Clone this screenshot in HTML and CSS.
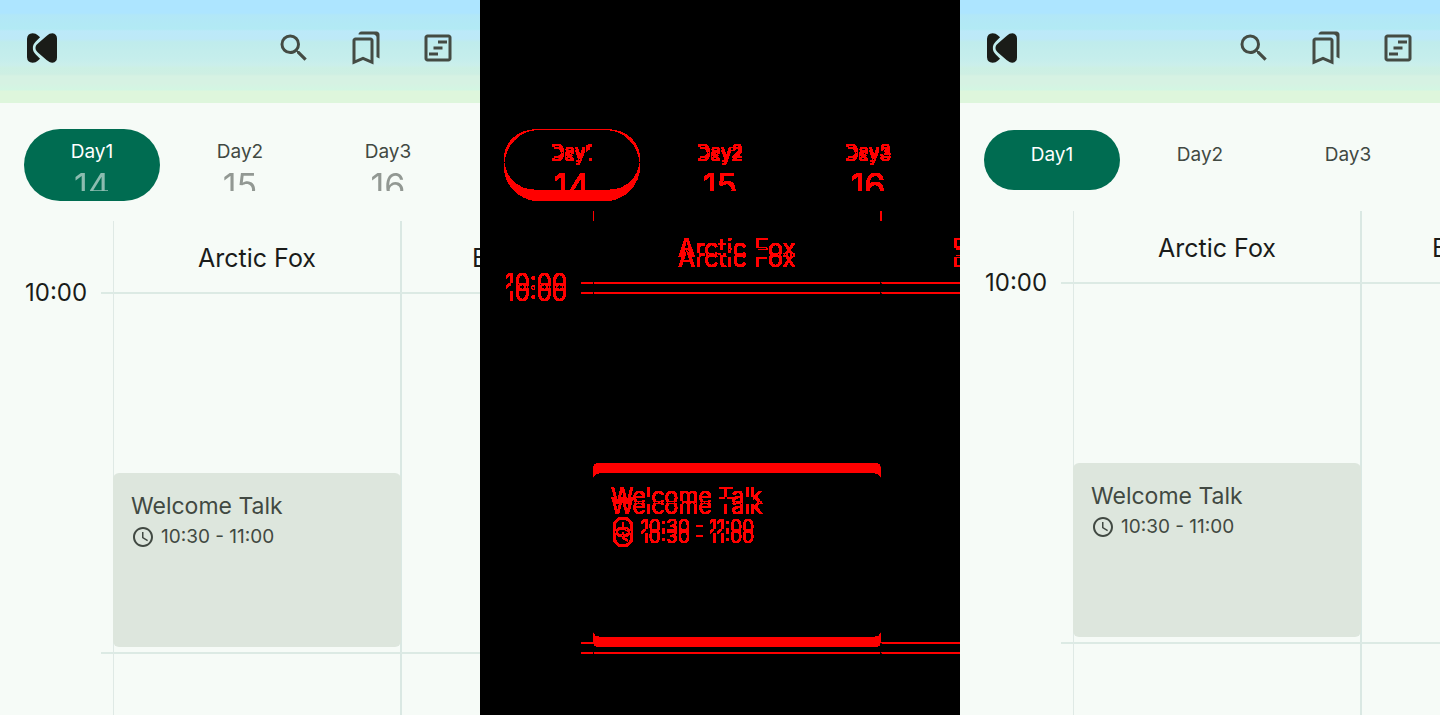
FILE: index.html
```
<!DOCTYPE html>
<html lang="en">
<head>
<meta charset="utf-8">
<title>Timetable comparison</title>
<link rel="stylesheet" href="styles.css">
</head>
<body>
<svg class="defs" aria-hidden="true">
  <defs>
    <filter id="mark-changes" x="0" y="0" width="100%" height="100%" color-interpolation-filters="sRGB">
      <feColorMatrix type="matrix" values="100 100 100 0 -1  0 0 0 0 0  0 0 0 0 0  0 0 0 0 1"/>
    </filter>
    <symbol id="logo" viewBox="0 0 92 90">
      <path d="M26 45C26 38 30 34 36 29L60 8C67 2 72 0 78 0Q92 2 92 16V74Q92 88 78 90C72 90 66 87 60 82L36 61C30 56 26 52 26 45Z"/>
      <path d="M0 17Q1 1 17 0C24 0 29 3 33 6L40 12L27 25C20 32 18 38 18 45C18 52 20 58 27 65L40 78L33 84C29 88 24 90 17 90Q1 89 0 73Z"/>
    </symbol>
    <symbol id="search" viewBox="0 0 24 24">
      <path d="M15.5 14h-.79l-.28-.27A6.47 6.47 0 0 0 16 9.5 6.5 6.5 0 1 0 9.5 16c1.61 0 3.09-.59 4.23-1.57l.27.28v.79l5 4.99L20.49 19l-4.99-5zm-6 0C7.01 14 5 11.99 5 9.5S7.01 5 9.5 5 14 7.01 14 9.5 11.99 14 9.5 14z"/>
    </symbol>
    <symbol id="bookmarks" viewBox="0 0 24 24">
      <path d="M15 7v12.97l-4.21-1.81-.79-.34-.79.34L5 19.97V7h10m4-6H8.99C7.89 1 7 1.9 7 3h10c1.1 0 2 .9 2 2v13l2 1V3c0-1.1-.9-2-2-2zm-4 4H5c-1.1 0-2 .9-2 2v16l7-3 7 3V7c0-1.1-.9-2-2-2z"/>
    </symbol>
    <symbol id="timeline" viewBox="0 0 24 24">
      <path d="M19 5v14H5V5h14m0-2H5c-1.1 0-2 .9-2 2v14c0 1.100.9 2 2 2h14c1.1 0 2-.9 2-2V5c0-1.1-.9-2-2-2zM12 7h6v2h-6zM9 11h6v2H9zM6 15h6v2H6z"/>
    </symbol>
    <symbol id="clock" viewBox="0 0 24 24">
      <path d="M11.990 2C6.470 2 2 6.480 2 12s4.470 10 9.990 10C17.520 22 22 17.520 22 12S17.520 2 11.990 2zM12 20c-4.420 0-8-3.580-8-8s3.580-8 8-8 8 3.580 8 8-3.580 8-8 8zM12.500 7H11v6l5.250 3.150.750-1.230-4.500-2.670z"/>
    </symbol>
  </defs>
</svg>
<main class="compare">
  <section class="screen" aria-label="Before">
    <header class="topbar">
      <svg class="logo" role="img" aria-label="Logo"><use href="#logo"/></svg>
      <nav class="actions">
        <button class="action" aria-label="Search"><svg class="icon"><use href="#search"/></svg></button>
        <button class="action" aria-label="Bookmarks"><svg class="icon"><use href="#bookmarks"/></svg></button>
        <button class="action" aria-label="Timetable"><svg class="icon"><use href="#timeline"/></svg></button>
      </nav>
    </header>
    <div class="days days-open">
      <button class="day selected"><span class="name">Day1</span><span class="date">14</span></button>
      <button class="day"><span class="name">Day2</span><span class="date">15</span></button>
      <button class="day"><span class="name">Day3</span><span class="date">16</span></button>
    </div>
    <div class="board">
      <div class="room first">Arctic Fox</div><div class="room second">Bumblebee</div>
      <div class="time">10:00</div>
      <div class="tick"></div><div class="slot"></div><div class="slot last"></div>
      <div class="tick next"></div><div class="slot next"></div><div class="slot last next"></div>
      <article class="session">
        <h2 class="title">Welcome Talk</h2>
        <p class="when"><svg class="clock"><use href="#clock"/></svg>10:30 - 11:00</p>
      </article>
    </div>
  </section>

  <section class="changes" aria-label="Changes">
    <div class="screen layer">
      <div class="topbar blank"></div>
      <div class="days days-open">
        <div class="day selected"><span class="name">Day1</span><span class="date">14</span></div>
        <div class="day"><span class="name">Day2</span><span class="date">15</span></div>
        <div class="day"><span class="name">Day3</span><span class="date">16</span></div>
      </div>
      <div class="board">
        <div class="room first">Arctic Fox</div><div class="room second">Bumblebee</div>
        <div class="time">10:00</div>
        <div class="tick"></div><div class="slot"></div><div class="slot last"></div>
        <div class="tick next"></div><div class="slot next"></div><div class="slot last next"></div>
        <div class="session">
          <div class="title">Welcome Talk</div>
          <div class="when"><svg class="clock"><use href="#clock"/></svg>10:30 - 11:00</div>
        </div>
      </div>
    </div>
    <div class="screen layer layer-top">
      <div class="topbar blank"></div>
      <div class="days days-folded">
        <div class="day selected"><span class="name">Day1</span></div>
        <div class="day"><span class="name">Day2</span></div>
        <div class="day"><span class="name">Day3</span></div>
      </div>
      <div class="board">
        <div class="room first">Arctic Fox</div><div class="room second">Bumblebee</div>
        <div class="time">10:00</div>
        <div class="tick"></div><div class="slot"></div><div class="slot last"></div>
        <div class="tick next"></div><div class="slot next"></div><div class="slot last next"></div>
        <div class="session">
          <div class="title">Welcome Talk</div>
          <div class="when"><svg class="clock"><use href="#clock"/></svg>10:30 - 11:00</div>
        </div>
      </div>
    </div>
  </section>

  <section class="screen" aria-label="After">
    <header class="topbar">
      <svg class="logo" role="img" aria-label="Logo"><use href="#logo"/></svg>
      <nav class="actions">
        <button class="action" aria-label="Search"><svg class="icon"><use href="#search"/></svg></button>
        <button class="action" aria-label="Bookmarks"><svg class="icon"><use href="#bookmarks"/></svg></button>
        <button class="action" aria-label="Timetable"><svg class="icon"><use href="#timeline"/></svg></button>
      </nav>
    </header>
    <div class="days days-folded">
      <button class="day selected"><span class="name">Day1</span></button>
      <button class="day"><span class="name">Day2</span></button>
      <button class="day"><span class="name">Day3</span></button>
    </div>
    <div class="board">
      <div class="room first">Arctic Fox</div><div class="room second">Bumblebee</div>
      <div class="time">10:00</div>
      <div class="tick"></div><div class="slot"></div><div class="slot last"></div>
      <div class="tick next"></div><div class="slot next"></div><div class="slot last next"></div>
      <article class="session">
        <h2 class="title">Welcome Talk</h2>
        <p class="when"><svg class="clock"><use href="#clock"/></svg>10:30 - 11:00</p>
      </article>
    </div>
  </section>
</main>
</body>
</html>
```

FILE: styles.css
```
* { box-sizing: border-box; }

body {
  margin: 0;
  background: #f6fbf7;
  color: #1a1c1a;
  font-family: Inter, "Open Sans", sans-serif;
}

button {
  padding: 0;
  border: 0;
  background: none;
  color: inherit;
  font: inherit;
}

.defs { display: block; width: 0; height: 0; }

.compare {
  display: grid;
  grid-template-columns: repeat(3, minmax(0, 1fr));
  min-height: 100vh;
}

.screen {
  display: flex;
  flex-direction: column;
  min-width: 0;
  overflow: hidden;
  background: #f6fbf7;
}

.changes {
  display: grid;
  grid-template-columns: minmax(0, 1fr);
  isolation: isolate;
  filter: url(#mark-changes);
}

.layer { grid-area: 1 / 1; }
.layer-top { mix-blend-mode: difference; }

.topbar {
  display: flex;
  align-items: center;
  justify-content: space-between;
  padding: 30px 24px 37px 27px;
  background: linear-gradient(#ade5ff 0, #ade5ff 13px, #b2e7f7 15px, #b2eaf4 29px, #bce9f9 31px, #bde9f7 39px, #bfecec 42px, #c6eeec 60px, #cbefeb 65px, #ccf0e4 68px, #ceefe3 74px, #d6f2e3 76px, #d6f2e3 83px, #d3f6e3 90px, #def6dc 91px, #def6dc 100%);
}

.topbar.blank { padding-bottom: 73px; }

.logo { width: 30px; height: 30px; fill: #1a1c18; }
.actions { display: flex; gap: 36px; }
.action { height: 36px; }
.icon { display: block; width: 36px; height: 36px; fill: #444b43; }

.days {
  display: grid;
  grid-template-columns: repeat(3, 1fr);
  gap: 12px;
  padding: 26px 24px 20px;
}

.day {
  display: flex;
  flex-direction: column;
  align-items: center;
  height: 72px;
  padding-top: 11px;
  border-radius: 36px;
  color: #414942;
  font-size: 19px;
  line-height: 24px;
}

.day.selected { background: #006c51; color: #fff; }

.date {
  height: 27px;
  overflow: hidden;
  font-size: 34px;
  line-height: 44px;
  opacity: 0.55;
}

.days-folded { padding: 27px 24px 21px; }
.days-folded .day { height: 60px; padding-top: 13px; }

.board {
  display: grid;
  flex: 1;
  grid-template-columns: 101px 12px 287px minmax(0, 1fr);
  grid-template-rows: 71px 360px minmax(60px, 1fr);
}

.room {
  border-left: 1px solid #dfe9e5;
  padding-top: 22px;
  font-size: 25px;
  line-height: 30px;
  text-align: center;
  white-space: nowrap;
}

.room.first { grid-area: 1 / 3; }

.room.second {
  grid-area: 1 / 4;
  overflow: hidden;
  border-left: 2px solid #dae8e3;
  padding-left: 70px;
  text-align: left;
}

.time {
  grid-area: 2 / 1;
  margin-top: -14px;
  padding-left: 25px;
  font-size: 24px;
  line-height: 30px;
}

.tick, .slot { grid-row: 2; border-top: 2px solid #dceae4; }
.tick { grid-column: 2; }
.slot { grid-column: 3; border-left: 1px solid #dfe9e5; }
.slot.last { grid-column: 4; border-left: 2px solid #dae8e3; }
.tick.next, .slot.next { grid-row: 3; }

.session {
  grid-area: 2 / 3;
  height: 174px;
  margin: 181px -1px 0 0;
  padding: 19px 18px;
  border-radius: 6px;
  background: #dde6dd;
  color: #414942;
}

.title {
  margin: 0 0 5px;
  font-size: 23px;
  font-weight: 400;
  line-height: 28px;
}

.when {
  display: flex;
  align-items: center;
  gap: 6px;
  margin: 0;
  font-size: 19px;
  line-height: 24px;
}

.clock { width: 24px; height: 24px; fill: #414942; }
```
